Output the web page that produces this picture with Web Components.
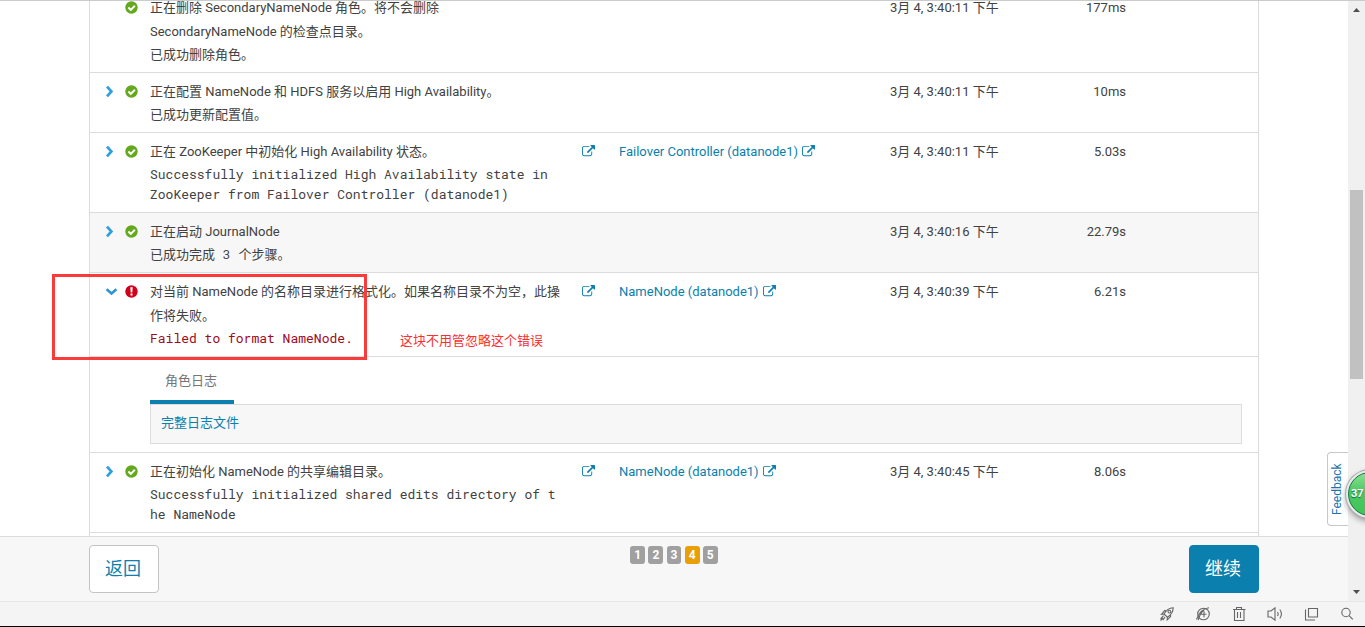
<!DOCTYPE html>
<html lang="zh-CN">
<head>
<meta charset="utf-8">
<title>启用 High Availability</title>
<style>
html, body { margin: 0; height: 100%; }
body {
  font: 13px/24px Roboto, "Noto Sans CJK SC", sans-serif;
  color: #424242;
  background: #fff;
  overflow: hidden;
  --link: #0b7fad;
  --line: #dcdcdc;
  --panel: #f7f7f7;
  --mono: "Roboto Mono", "Liberation Mono", "Noto Sans CJK SC", monospace;
}
</style>
</head>
<body>
<app-shell>
  <step-table></step-table>
  <wizard-footer slot="footer" current="4" total="5"></wizard-footer>
  <page-scrollbar slot="scrollbar"></page-scrollbar>
  <feedback-tab slot="overlay">Feedback</feedback-tab>
  <speed-ball slot="overlay">37</speed-ball>
  <browser-bar slot="status"></browser-bar>
</app-shell>

<script>
function define(name, html) {
  customElements.define(name, class extends HTMLElement {
    connectedCallback() {
      if (this.shadowRoot) return;
      const root = this.attachShadow({ mode: 'open' });
      root.innerHTML = typeof html === 'function' ? html(this) : html;
    }
  });
}

const ICONS = {
  right: '<path d="M4 1.6 8.4 6.5 4 11.4" fill="none" stroke="#2fa0dc" stroke-width="2.7"/>',
  down: '<path d="M1.6 4.3 6.5 8.5 11.4 4.3" fill="none" stroke="#2f96d0" stroke-width="2.6"/>',
  ok: '<circle cx="6.5" cy="6.5" r="6.2" fill="#64a81c"/><path d="M3.4 6.5 5.8 8.9 9.9 4.8" fill="none" stroke="#fff" stroke-width="2"/>',
  error: '<circle cx="6.5" cy="6.5" r="6.2" fill="#d0021b"/><path d="M5.3 2.2h2.4l-.4 5.2H5.7zM5.5 8.5h2v2h-2z" fill="#fff"/>',
  external: '<path transform="scale(.00725)" fill="#0b7fad" d="M1408 928v320q0 119-84.5 203.5t-203.5 84.5h-832q-119 0-203.5-84.5t-84.5-203.5v-832q0-119 84.5-203.5t203.5-84.5h704q14 0 23 9t9 23v64q0 14-9 23t-23 9h-704q-66 0-113 47t-47 113v832q0 66 47 113t113 47h832q66 0 113-47t47-113v-320q0-14 9-23t23-9h64q14 0 23 9t9 23zm384-864v512q0 26-19 45t-45 19-45-19l-176-176-652 652q-10 10-23 10t-23-10l-114-114q-10-10-10-23t10-23l652-652-176-176q-19-19-19-45t19-45 45-19h512q26 0 45 19t19 45z"/>'
};
define('step-icon', el => `
<style>:host{display:inline-block;width:13px;height:13px}svg{display:block}</style>
<svg width="13" height="13" viewBox="0 0 13 13" aria-hidden="true">${ICONS[el.getAttribute('name')]}</svg>`);

define('app-shell', `
<style>
:host{display:flex;flex-direction:column;height:100vh;overflow:hidden;position:relative;box-sizing:border-box;border-top:1px solid #c9cccb}
.view{flex:1;min-height:0;display:flex}
.page{flex:1;min-width:0;display:flex;flex-direction:column}
main{flex:1;min-height:0;overflow:hidden}
</style>
<div class="view">
  <div class="page"><main><slot></slot></main><slot name="footer"></slot></div>
  <slot name="scrollbar"></slot>
</div>
<slot name="status"></slot>
<slot name="overlay"></slot>`);

const STEPS = [
  { title: '正在删除 SecondaryNameNode 角色。将不会删除 SecondaryNameNode 的检查点目录。', msg: '已成功删除角色。', time: '3月 4, 3:40:11 下午', took: '177ms', leaf: true },
  { title: '正在配置 NameNode 和 HDFS 服务以启用 High Availability。', msg: '已成功更新配置值。', time: '3月 4, 3:40:11 下午', took: '10ms' },
  { title: '正在 ZooKeeper 中初始化 High Availability 状态。', msg: 'Successfully initialized High Availability state in ZooKeeper from Failover Controller (datanode1)', role: 'Failover Controller (datanode1)', time: '3月 4, 3:40:11 下午', took: '5.03s' },
  { title: '正在启动 JournalNode', msg: '已成功完成 3 个步骤。', time: '3月 4, 3:40:16 下午', took: '22.79s', hover: true },
  { title: '对当前 NameNode 的名称目录进行格式化。如果名称目录不为空，此操作将失败。', msg: 'Failed to format NameNode.', role: 'NameNode (datanode1)', time: '3月 4, 3:40:39 下午', took: '6.21s', failed: true, note: '这块不用管忽略这个错误' },
  { title: '正在初始化 NameNode 的共享编辑目录。', msg: 'Successfully initialized shared edits directory of the NameNode', role: 'NameNode (datanode1)', time: '3月 4, 3:40:45 下午', took: '8.06s' }
];

define('step-note', `
<style>
:host{position:absolute;left:-38px;top:1px;width:309px;height:80px;border:3px solid #fb3a3a;pointer-events:none}
span{position:absolute;left:345px;top:52px;white-space:nowrap;color:#fb2f2f}
</style><span><slot></slot></span>`);

define('step-logs', `
<style>
:host{display:block;padding:0 16px 8px 60px}
nav{display:flex}
nav a{padding:12px 17px 7px 15px;border-bottom:4px solid var(--link);color:#757575;text-decoration:none}
div{border:1px solid var(--line);background:var(--panel);padding:6px 10px 8px}
div a{color:var(--link);text-decoration:none}
</style>
<nav><a href="#logs">角色日志</a></nav>
<div><a href="#full">完整日志文件</a></div>`);

const toggle = s => s.leaf ? '' : `<button class="${s.failed ? 'open' : ''}" aria-label="${s.failed ? '收起' : '展开'}"><step-icon name="${s.failed ? 'down' : 'right'}"></step-icon></button>`;

const row = s => `
<tr class="${s.hover ? 'hover' : ''}">
  <td class="toggle">${toggle(s)}${s.note ? `<step-note>${s.note}</step-note>` : ''}</td>
  <td><step-icon name="${s.failed ? 'error' : 'ok'}"></step-icon></td>
  <td class="name">${s.title}<pre class="${s.failed ? 'failed' : ''}">${s.msg}</pre></td>
  <td>${s.role ? '<a href="#open" aria-label="详细信息"><step-icon name="external"></step-icon></a>' : ''}</td>
  <td>${s.role ? `<a class="role" href="#role">${s.role} <step-icon name="external"></step-icon></a>` : ''}</td>
  <td>${s.time}</td>
  <td class="took">${s.took}</td>
  <td></td>
</tr>${s.failed ? '<tr><td colspan="8"><step-logs></step-logs></td></tr>' : ''}`;

define('step-table', `
<style>
:host{display:block;max-width:1170px;margin:-12px auto 0}
table{width:100%;table-layout:fixed;border-spacing:0;border:solid var(--line);border-width:0 1px}
td{padding:7px 0 8px;border-bottom:1px solid var(--line);vertical-align:top}
td[colspan]{padding:0}
.hover td{background:var(--panel)}
.toggle{position:relative;padding-left:13px}
.name{padding-right:20px}
.took{text-align:right}
pre{margin:0;font:13px/20px var(--mono);white-space:pre-wrap;word-break:break-all}
.failed{color:#a00a1e}
a{color:var(--link);text-decoration:none}
button{display:block;height:24px;padding:0;border:0;background:none;line-height:24px}
.open{margin-left:2px}
step-icon{vertical-align:-2px}
.role step-icon{margin-left:1px}
.w-toggle{width:35px}.w-status{width:25px}.w-name{width:432px}.w-open{width:37px}
.w-role{width:271px}.w-time{width:151px}.w-took{width:85px}
</style>
<table>
<colgroup><col class="w-toggle"><col class="w-status"><col class="w-name"><col class="w-open"><col class="w-role"><col class="w-time"><col class="w-took"><col></colgroup>
<tbody>${STEPS.map(row).join('')}<tr><td colspan="8">&nbsp;</td></tr></tbody>
</table>`);

define('wizard-footer', el => {
  const now = +el.getAttribute('current');
  const pages = Array.from({ length: +el.getAttribute('total') }, (_, i) => i + 1);
  return `
<style>
:host{display:block;background:var(--panel);border-top:1px solid var(--line);padding:8px 0}
.row{max-width:1170px;margin:0 auto;display:flex;justify-content:space-between}
button{font:18px/24px Roboto,"Noto Sans CJK SC",sans-serif;padding:11px 17px 11px 15px;border-radius:4px;border:1px solid #c4c4c4;background:#fff;color:var(--link)}
.primary{background:var(--link);border-color:var(--link);color:#fff}
ol{margin:0;padding:1px 0 0;list-style:none;font-size:13px;line-height:18px}
li{display:inline-block;padding:0 4px;border-radius:3px;background:#a0a0a0;color:#fff;font-size:12px;font-weight:700}
.now{background:#e89f08}
</style>
<div class="row">
  <button>返回</button>
  <ol>${pages.map(n => `<li${n === now ? ' class="now" aria-current="step"' : ''}>${n}</li>`).join(' ')}</ol>
  <button class="primary">继续</button>
</div>`;
});

define('page-scrollbar', `
<style>
:host{display:flex;flex-direction:column;align-items:center;width:17px;background:#f0f0f0}
svg{display:block;flex:none}
.before{flex:172}.thumb{flex:189;width:13px;background:#c1c1c1}.after{flex:205}
</style>
<svg width="17" height="17"><path d="M5 11 8.5 7 12 11z" fill="#505050"/></svg>
<div class="before"></div><div class="thumb"></div><div class="after"></div>
<svg width="17" height="17"><path d="M5 6 8.5 10 12 6z" fill="#505050"/></svg>`);

define('feedback-tab', `
<style>
:host{position:absolute;right:17px;bottom:101px}
a{display:block;writing-mode:vertical-rl;transform:rotate(180deg);box-sizing:border-box;width:21px;height:74px;font-size:12px;line-height:18px;text-align:center;border:1px solid #c8c8c8;border-left:0;border-radius:0 4px 4px 0;background:#fff;color:#1d74ab;text-decoration:none}
</style><a href="#feedback"><slot></slot></a>`);

define('speed-ball', `
<style>
:host{position:absolute;right:-29px;bottom:109px;box-sizing:border-box;width:48px;height:48px;border-radius:50%;border:2px solid #e9e9e9;box-shadow:0 0 0 1px #a9a9a9,0 3px 6px #0006;background:#e9e9e9}
div{box-sizing:border-box;height:44px;border-radius:50%;border:1px solid #0e7b43;background:linear-gradient(#8be093,#4cc862 45%,#3fc557);color:#fff;font:bold 11px/42px Roboto,sans-serif;padding-left:2px;text-shadow:0 1px 1px #064}
</style><div><slot></slot></div>`);

define('browser-bar', `
<style>
:host{display:flex;justify-content:flex-end;align-items:center;gap:20px;padding:0 10px;height:24px;background:#f4f4f4;border-top:1px solid #e6e6e6;border-bottom:1px solid #000}
button{display:block;padding:0;border:0;background:none;width:16px;height:16px}
svg{display:block;fill:none;stroke:#666;stroke-width:1.1}
</style>
<button aria-label="加速"><svg width="16" height="16"><path d="M5 8C7 4.5 9.500 2 14.200 1.800 14.200 6 12 9 8.400 11.200zM5 8 2.500 8.300 5.600 4.600 7.400 4.800M8.400 11.200 8.200 13.800 11.600 10.600 11.500 8.600M5 8 8.400 11.200M4.600 9.600 1.600 12.800M6 11 3.800 14.200M4 12 1.500 14.500"/><circle cx="10.400" cy="5.600" r="1.400"/></svg></button>
<button aria-label="新标签"><svg width="16" height="16"><circle cx="8.500" cy="8" r="5.800"/><path d="M1.500 13.500C4 6.500 8 2.500 14 1.800M3.200 14.200C4.500 9 6.500 6 9 4M5.500 8.300h6M9 5.300v6"/></svg></button>
<button aria-label="清理"><svg width="16" height="16"><path d="M2 3.500h12.500M5.500 3.500v-2h5v2M3.500 3.500v11h9.500v-11M6.500 6v6M9.500 6v6"/></svg></button>
<button aria-label="声音"><svg width="16" height="16"><path d="M1 5h3l4-3.200v12.400L4 11H1zM10.500 6q1.300 2 0 4M12.800 3.500q3.200 4.500 0 9"/></svg></button>
<button aria-label="多窗口"><svg width="16" height="16"><path d="M5.500 2.500h9v8.500h-9zM2.500 3.500v10.500h9.500"/></svg></button>
<button aria-label="缩放"><svg width="16" height="16"><circle cx="7" cy="6.500" r="4.200"/><path d="M10 9.600 13.800 13.400"/></svg></button>`);
</script>
</body>
</html>
